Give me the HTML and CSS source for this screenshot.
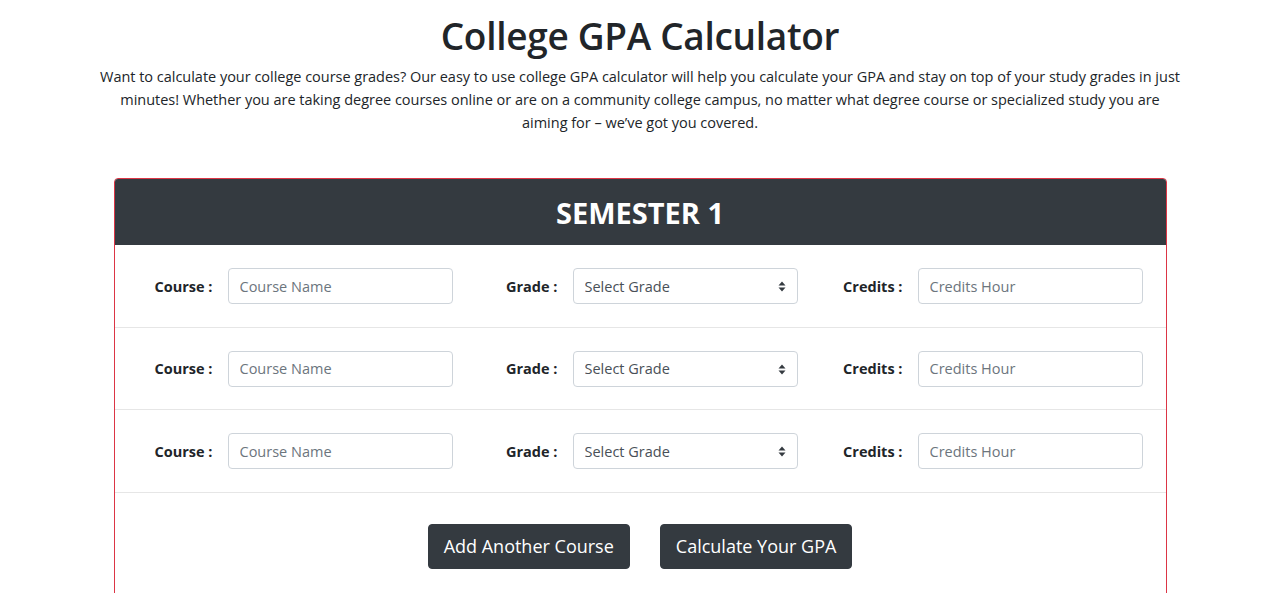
FILE: index.html
```html
<!DOCTYPE html>
<html lang="en">
<head>
<meta charset="utf-8">
<title>College GPA Calculator</title>
<link rel="stylesheet" href="styles.css">
</head>
<body>
<header class="intro">
  <h1 class="title">College GPA Calculator</h1>
  <p class="lead">Want to calculate your college course grades? Our easy to use college GPA calculator will help you calculate your GPA and stay on top of your study grades in just<br>minutes! Whether you are taking degree courses online or are on a community college campus, no matter what degree course or specialized study you are<br>aiming for – we’ve got you covered.</p>
</header>

<main class="card">
  <div class="card-head">SEMESTER 1</div>

  <div class="course-row">
    <div class="field"><label class="field-label">Course :</label><input class="control" type="text" placeholder="Course Name"></div>
    <div class="field"><label class="field-label">Grade :</label><div class="select-wrap"><select class="control select"><option>Select Grade</option></select><svg class="select-arrow" width="8" height="11" viewBox="0 0 8 11"><path d="M4 0.5 L7.5 4.5 H0.5 Z M4 10.5 L0.5 6.5 H7.5 Z" fill="#343a40"/></svg></div></div>
    <div class="field"><label class="field-label">Credits :</label><input class="control" type="text" placeholder="Credits Hour"></div>
  </div>

  <div class="course-row">
    <div class="field"><label class="field-label">Course :</label><input class="control" type="text" placeholder="Course Name"></div>
    <div class="field"><label class="field-label">Grade :</label><div class="select-wrap"><select class="control select"><option>Select Grade</option></select><svg class="select-arrow" width="8" height="11" viewBox="0 0 8 11"><path d="M4 0.5 L7.5 4.5 H0.5 Z M4 10.5 L0.5 6.5 H7.5 Z" fill="#343a40"/></svg></div></div>
    <div class="field"><label class="field-label">Credits :</label><input class="control" type="text" placeholder="Credits Hour"></div>
  </div>

  <div class="course-row">
    <div class="field"><label class="field-label">Course :</label><input class="control" type="text" placeholder="Course Name"></div>
    <div class="field"><label class="field-label">Grade :</label><div class="select-wrap"><select class="control select"><option>Select Grade</option></select><svg class="select-arrow" width="8" height="11" viewBox="0 0 8 11"><path d="M4 0.5 L7.5 4.5 H0.5 Z M4 10.5 L0.5 6.5 H7.5 Z" fill="#343a40"/></svg></div></div>
    <div class="field"><label class="field-label">Credits :</label><input class="control" type="text" placeholder="Credits Hour"></div>
  </div>

  <div class="actions">
    <button class="btn" type="button">Add Another Course</button>
    <button class="btn" type="button">Calculate Your GPA</button>
  </div>
</main>
</body>
</html>
```

FILE: styles.css
```css
* { box-sizing: border-box; }

body {
  margin: 0;
  font-family: "Open Sans", "Noto Sans", sans-serif;
  color: #212529;
  background: #fff;
}

.intro {
  text-align: center;
  padding-top: 12px;
}

.title {
  margin: 0;
  font-size: 37px;
  font-weight: 600;
  line-height: 48px;
  letter-spacing: -0.3px;
}

.lead {
  margin: 5px auto 0;
  width: 1220px;
  font-size: 14.5px;
  line-height: 23px;
  letter-spacing: -0.02px;
}

.card {
  margin: 44px auto 0;
  width: 1053px;
  border: 1px solid #dc3545;
  border-radius: 4px;
  padding-bottom: 40px;
}

.card-head {
  background: #343a40;
  color: #fff;
  text-align: center;
  font-size: 29px;
  font-weight: 700;
  height: 66px;
  line-height: 67px;
  border-radius: 3px 3px 0 0;
}

.course-row {
  display: grid;
  grid-template-columns: repeat(3, 345px);
  justify-content: end;
  align-items: center;
  padding: 1px 23px 0 0;
  height: 82.5px;
  border-bottom: 1px solid #e6e6e6;
}

.field {
  display: flex;
  justify-content: flex-end;
  align-items: center;
  gap: 15px;
}

.field-label {
  font-size: 14.5px;
  font-weight: 700;
  color: #212529;
}

.control {
  width: 225px;
  height: 36px;
  border: 1px solid #ced4da;
  border-radius: 4px;
  padding: 0 11px;
  font-family: inherit;
  font-size: 14.5px;
  color: #495057;
  background: #fff;
}

.control::placeholder { color: #6c757d; }

.select-wrap {
  position: relative;
  width: 225px;
}

.select {
  appearance: none;
  -webkit-appearance: none;
  color: #495057;
  display: block;
}

.select-arrow {
  position: absolute;
  right: 12px;
  top: 13px;
  pointer-events: none;
}

.actions {
  display: flex;
  justify-content: center;
  gap: 30px;
  padding-top: 31px;
}

.btn {
  background: #343a40;
  color: #fff;
  border: 1px solid #343a40;
  border-radius: 4px;
  height: 45px;
  padding: 0 15px;
  font-family: inherit;
  font-size: 18px;
}
```
